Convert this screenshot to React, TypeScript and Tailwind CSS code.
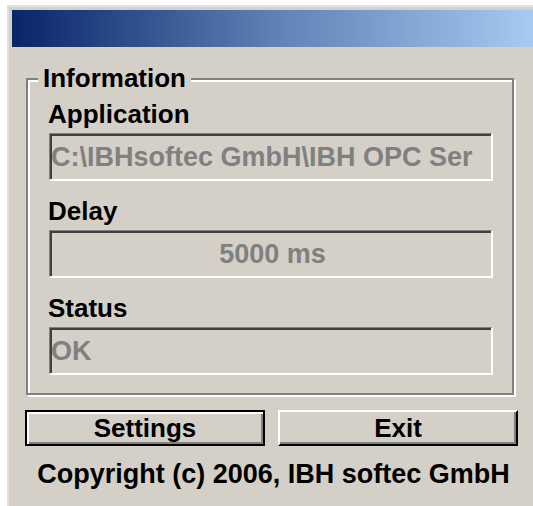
const font = { fontFamily: '"Liberation Sans", Arial, sans-serif' };

function Field({ value, center = false }: { value: string; center?: boolean }) {
  return (
    <div
      className={`ml-[1px] mt-[4px] flex h-[48px] w-[444px] items-center overflow-hidden whitespace-nowrap border-t border-l border-b-2 border-r-2 border-t-[#808080] border-l-[#808080] border-b-white border-r-white bg-[#d4d0c8] pl-[1px] text-[27px] leading-[30px] font-bold text-[#808080] shadow-[inset_2px_2px_0_#404040] ${
        center ? "justify-center pl-[4px]" : ""
      }`}
    >
      {value}
    </div>
  );
}

function Label({ text, first = false }: { text: string; first?: boolean }) {
  return (
    <div className={`h-[30px] text-[26px] leading-[30px] font-bold text-black ${first ? "" : "mt-[15px]"}`}>
      {text}
    </div>
  );
}

export default function App() {
  return (
    <div className="h-[506px] w-[533px] overflow-hidden bg-white pt-[5px] pl-[7px]" style={font}>
      <div className="h-[501px] w-[526px] border-t-2 border-l-2 border-[#e2e0da] bg-[#d4d0c8]">
        {/* caption bar */}
        <div className="mt-[3px] ml-[3px] h-[37px] w-[521px] bg-gradient-to-r from-[#0a246a] via-[#5f80b4] to-[#a6caf0]" />

        {/* Information group */}
        <div className="relative mt-[31px] ml-[17px] w-[488px] border-2 border-[#808080] pt-[19px] pr-[19px] pb-[18px] pl-[20px] shadow-[inset_2px_2px_0_#fff,2px_2px_0_#fff]">
          <span className="absolute -top-[17px] left-[10px] bg-[#d4d0c8] px-[5px] text-[26px] leading-[30px] font-bold text-black">
            Information
          </span>
          <Label text="Application" first />
          <Field value="C:\IBHsoftec GmbH\IBH OPC Ser" />
          <Label text="Delay" />
          <Field value="5000 ms" center />
          <Label text="Status" />
          <Field value="OK" />
        </div>

        <div className="mt-[15px] ml-[16px] flex gap-[13px]">
          <button
            type="button"
            className="h-[36px] w-[240px] border-2 border-black bg-[#d4d0c8] text-[26px] leading-[30px] font-bold text-black shadow-[inset_2px_2px_0_#fff,inset_-2px_-2px_0_#808080]"
          >
            Settings
          </button>
          <button
            type="button"
            className="h-[36px] w-[240px] border-2 border-t-white border-l-white border-b-black border-r-black bg-[#d4d0c8] text-[26px] leading-[30px] font-bold text-black shadow-[inset_-2px_-2px_0_#808080]"
          >
            Exit
          </button>
        </div>

        <div className="mt-[13px] ml-[16px] w-[493px] pl-[4px] text-center text-[27px] leading-[30px] font-bold text-black">
          Copyright (c) 2006, IBH softec GmbH
        </div>
      </div>
    </div>
  );
}
